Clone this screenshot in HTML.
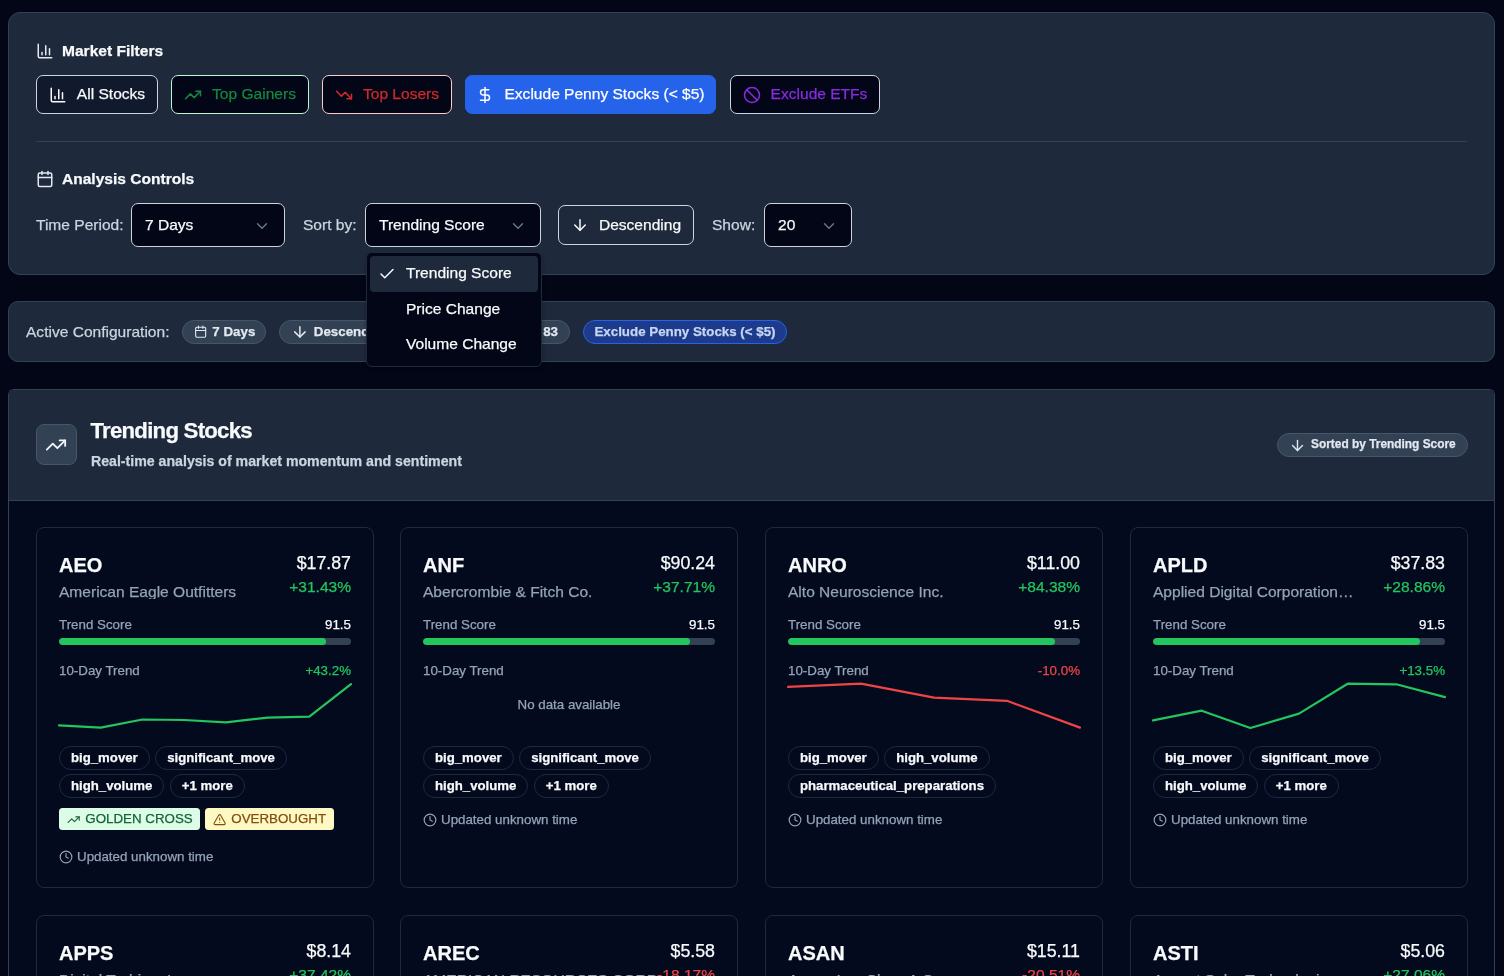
<!DOCTYPE html>
<html>
<head>
<meta charset="utf-8">
<style>
*{box-sizing:border-box;margin:0;padding:0}
html,body{width:1504px;height:976px;overflow:hidden;background:#020617;-webkit-font-smoothing:antialiased;-webkit-text-stroke:0.25px currentColor;font-family:"Liberation Sans",sans-serif;color:#f8fafc}
.a{position:absolute;line-height:1;white-space:nowrap}
svg.i{fill:none;stroke:currentColor;stroke-width:2;stroke-linecap:round;stroke-linejoin:round;display:block}
.panel{position:absolute;background:#1e293b;border:1px solid #334155;border-radius:12px}
.btn{position:absolute;top:75px;height:39px;border:1px solid #cbd5e1;border-radius:7px;background:#020617;display:flex;align-items:center;justify-content:center;gap:10px;font-size:15.56px;line-height:1}
.btn span{position:relative;top:-1px}
.sel{position:absolute;top:203px;height:44px;border:1px solid #cbd5e1;border-radius:7px;background:#020617;font-size:15.56px;line-height:1}
.sel .v{position:absolute;left:13px;top:12.5px;color:#f8fafc}
.sel svg{position:absolute;top:12.5px;color:#64748b}
.lbl{position:absolute;font-size:15.56px;line-height:1;color:#cbd5e1;white-space:nowrap}
.chip{position:absolute;top:320px;height:24px;border-radius:12px;background:#334155;border:1px solid #475569;color:#e2e8f0;font-weight:700;font-size:13.33px;line-height:1;display:flex;align-items:center;white-space:nowrap}
.card{position:absolute;width:338px;height:361px;border:1px solid #1e293b;border-radius:8px;background:#040a1e;overflow:hidden}
.tag{position:relative;height:24px;padding-bottom:1px !important;border:1px solid #1e293b;border-radius:12px;font-weight:700;font-size:13.2px;line-height:1;color:#f8fafc;display:flex;align-items:center;padding:0 11px;white-space:nowrap}
</style>
</head>
<body><div id="root" style="position:absolute;left:0;top:0;width:1504px;height:976px;will-change:transform">

<!-- Panel 1 -->
<div class="panel" style="left:8px;top:12px;width:1487px;height:263px"></div>

<svg class="i" style="position:absolute;left:36px;top:42px;color:#e2e8f0" width="18" height="18" viewBox="0 0 24 24"><path d="M3 3v16a2 2 0 0 0 2 2h16"/><path d="M18 17V9"/><path d="M13 17V5"/><path d="M8 17v-3"/></svg>
<div class="a" style="left:62px;top:43px;font-size:15.56px;font-weight:700">Market Filters</div>

<div class="btn" style="left:36px;width:122px;background:#111a2d;color:#f8fafc">
<svg class="i" width="18" height="18" viewBox="0 0 24 24"><path d="M3 3v16a2 2 0 0 0 2 2h16"/><path d="M18 17V9"/><path d="M13 17V5"/><path d="M8 17v-3"/></svg><span>All Stocks</span></div>
<div class="btn" style="left:171px;width:138px;border-color:#bbf7d0;color:#17873f">
<svg class="i" width="18" height="18" viewBox="0 0 24 24"><polyline points="22 7 13.5 15.5 8.5 10.5 2 17"/><polyline points="16 7 22 7 22 13"/></svg><span>Top Gainers</span></div>
<div class="btn" style="left:322px;width:130px;border-color:#fecaca;color:#d02a2a">
<svg class="i" width="18" height="18" viewBox="0 0 24 24"><polyline points="22 17 13.5 8.5 8.5 13.5 2 7"/><polyline points="16 17 22 17 22 11"/></svg><span>Top Losers</span></div>
<div class="btn" style="left:465px;width:251px;border-color:#2563eb;background:#2563eb;color:#ffffff">
<svg class="i" width="18" height="18" viewBox="0 0 24 24"><line x1="12" x2="12" y1="2" y2="22"/><path d="M17 5H9.5a3.5 3.5 0 0 0 0 7h5a3.5 3.5 0 0 1 0 7H6"/></svg><span>Exclude Penny Stocks (&lt; $5)</span></div>
<div class="btn" style="left:730px;width:150px;color:#8a2be2">
<svg class="i" width="18" height="18" viewBox="0 0 24 24"><circle cx="12" cy="12" r="10"/><path d="m4.9 4.9 14.2 14.2"/></svg><span>Exclude ETFs</span></div>

<div style="position:absolute;left:36px;top:141px;width:1431px;height:1px;background:#334155"></div>

<svg class="i" style="position:absolute;left:36px;top:170px;color:#e2e8f0" width="18" height="18" viewBox="0 0 24 24"><path d="M8 2v4"/><path d="M16 2v4"/><rect width="18" height="18" x="3" y="4" rx="2"/><path d="M3 10h18"/></svg>
<div class="a" style="left:62px;top:171px;font-size:15.56px;font-weight:700">Analysis Controls</div>

<div class="lbl" style="left:36px;top:217px">Time Period:</div>
<div class="sel" style="left:131px;width:154px"><span class="v">7 Days</span>
<svg class="i" style="left:121px" width="18" height="18" viewBox="0 0 24 24"><path d="m6 9 6 6 6-6"/></svg></div>

<div class="lbl" style="left:303px;top:217px">Sort by:</div>
<div class="sel" style="left:365px;width:176px"><span class="v">Trending Score</span>
<svg class="i" style="left:143px" width="18" height="18" viewBox="0 0 24 24"><path d="m6 9 6 6 6-6"/></svg></div>

<div class="btn" style="left:558px;top:205px;height:40px;width:136px;background:transparent;color:#f8fafc">
<svg class="i" width="18" height="18" viewBox="0 0 24 24"><path d="M12 5v14"/><path d="m19 12-7 7-7-7"/></svg><span style="top:-0.2px">Descending</span></div>

<div class="lbl" style="left:712px;top:217px">Show:</div>
<div class="sel" style="left:764px;width:88px"><span class="v">20</span>
<svg class="i" style="left:55px" width="18" height="18" viewBox="0 0 24 24"><path d="m6 9 6 6 6-6"/></svg></div>

<!-- Active configuration -->
<div class="panel" style="left:8px;top:301px;width:1487px;height:61px;border-radius:10px"></div>
<div class="lbl" style="left:26px;top:323.5px">Active Configuration:</div>
<div class="chip" style="left:182px;width:84px;padding-left:11px">
<svg class="i" width="13.33" height="13.33" viewBox="0 0 24 24"><path d="M8 2v4"/><path d="M16 2v4"/><rect width="18" height="18" x="3" y="4" rx="2"/><path d="M3 10h18"/></svg><span style="margin-left:5px">7 Days</span></div>
<div class="chip" style="left:279px;width:118px;padding-left:11px">
<svg class="i" width="17.8" height="17.8" viewBox="0 0 24 24"><path d="M12 5v14"/><path d="m19 12-7 7-7-7"/></svg><span style="margin-left:5px">Descending</span></div>
<div class="chip" style="left:410px;width:160px;justify-content:flex-end;padding-right:11px"><span>Min Score: 83</span></div>
<div class="chip" style="left:583px;width:204px;background:#1e3a8a;border-color:#2563eb;color:#c5d5f5;justify-content:center"><span>Exclude Penny Stocks (&lt; $5)</span></div>

<!-- Trending panel -->
<div style="position:absolute;left:8px;top:389px;width:1487px;height:700px;border:1px solid #334155;border-radius:6px;background:#040a1e"></div>
<div style="position:absolute;left:9px;top:390px;width:1485px;height:111px;background:#1e293b;border-bottom:1px solid #334155"></div>
<div style="position:absolute;left:36px;top:424px;width:41px;height:41px;border-radius:8px;background:#334155;border:1px solid #475569"></div>
<svg class="i" style="position:absolute;left:45px;top:434px;color:#f1f5f9" width="22" height="22" viewBox="0 0 24 24"><polyline points="22 7 13.5 15.5 8.5 10.5 2 17"/><polyline points="16 7 22 7 22 13"/></svg>
<div class="a" style="left:90.5px;top:419.5px;font-size:22.2px;font-weight:700;letter-spacing:-0.75px">Trending Stocks</div>
<div class="a" style="left:91px;top:454.3px;font-size:14.15px;font-weight:700;color:#cbd5e1">Real-time analysis of market momentum and sentiment</div>
<div class="chip" style="left:1277px;top:433px;width:191px;padding-left:11px">
<svg class="i" width="17" height="17" viewBox="0 0 24 24"><path d="M12 5v14"/><path d="m19 12-7 7-7-7"/></svg><span style="margin-left:5px;font-size:11.9px">Sorted by Trending Score</span></div>

<!-- CARDS -->
<div class="card" style="left:36px;top:527px">
<div class="a" style="left:22px;top:27.1px;font-size:20px;font-weight:700;color:#f8fafc">AEO</div>
<div class="a" style="right:22px;top:27.09px;font-size:17.78px;color:#f8fafc">$17.87</div>
<div class="a" style="left:22px;top:55.77px;font-size:15.56px;color:#94a3b8;max-width:200px;overflow:hidden;text-overflow:ellipsis;">American Eagle Outfitters</div>
<div class="a" style="right:22px;top:50.87px;font-size:15.56px;color:#22c55e">+31.43%</div>
<div class="a" style="left:22px;top:89.67px;font-size:13.33px;color:#94a3b8">Trend Score</div>
<div class="a" style="right:22px;top:89.67px;font-size:13.33px;color:#f8fafc">91.5</div>
<div style="position:absolute;left:22px;top:110px;width:292px;height:7px;border-radius:4px;background:#334155;overflow:hidden"><div style="width:91.5%;height:100%;background:#22c55e;border-radius:4px"></div></div>
<div class="a" style="left:22px;top:135.87px;font-size:13.33px;color:#94a3b8">10-Day Trend</div>
<div class="a" style="right:22px;top:135.87px;font-size:13.33px;color:#22c55e">+43.2%</div>
<svg style="position:absolute;left:21px;top:150px" width="294" height="60" viewBox="0 0 294 60"><polyline points="1.00,47.40 42.71,49.70 84.43,41.50 126.14,42.00 167.86,44.30 209.57,39.60 251.29,38.70 293.00,6.10" fill="none" stroke="#22c55e" stroke-width="2.2" stroke-linejoin="round" stroke-linecap="round"/></svg>
<div style="position:absolute;left:22px;top:218px;width:292px;display:flex;flex-wrap:wrap;gap:4px 5.5px"><div class="tag">big_mover</div><div class="tag">significant_move</div><div class="tag">high_volume</div><div class="tag">+1 more</div></div>
<div style="position:absolute;left:22px;top:280px;height:22px;width:141px;border-radius:3.5px;background:#dcfce7;color:#166534;font-size:13.33px;line-height:1;display:flex;align-items:center;padding-left:8px;gap:5px"><svg class="i" style="position:relative;top:1px" width="13.33" height="13.33" viewBox="0 0 24 24"><polyline points="22 7 13.5 15.5 8.5 10.5 2 17"/><polyline points="16 7 22 7 22 13"/></svg><span>GOLDEN CROSS</span></div>
<div style="position:absolute;left:168px;top:280px;height:22px;width:129px;border-radius:3.5px;background:#fef9c3;color:#854d0e;font-size:13.33px;line-height:1;display:flex;align-items:center;padding-left:8px;gap:5px"><svg class="i" style="position:relative;top:1px" width="13.33" height="13.33" viewBox="0 0 24 24"><path d="m21.73 18-8-14a2 2 0 0 0-3.48 0l-8 14A2 2 0 0 0 4 21h16a2 2 0 0 0 1.73-3Z"/><path d="M12 9v4"/><path d="M12 17h.01"/></svg><span>OVERBOUGHT</span></div>
<div style="position:absolute;left:22px;top:322.14px;color:#94a3b8;display:flex;align-items:center;gap:4px;font-size:13.33px;line-height:1;white-space:nowrap"><svg class="i" width="14" height="14" viewBox="0 0 24 24"><circle cx="12" cy="12" r="10"/><polyline points="12 6 12 12 16 14"/></svg><span>Updated unknown time</span></div>
</div>
<div class="card" style="left:400px;top:527px">
<div class="a" style="left:22px;top:27.1px;font-size:20px;font-weight:700;color:#f8fafc">ANF</div>
<div class="a" style="right:22px;top:27.09px;font-size:17.78px;color:#f8fafc">$90.24</div>
<div class="a" style="left:22px;top:55.77px;font-size:15.56px;color:#94a3b8;max-width:200px;overflow:hidden;text-overflow:ellipsis;">Abercrombie &amp; Fitch Co.</div>
<div class="a" style="right:22px;top:50.87px;font-size:15.56px;color:#22c55e">+37.71%</div>
<div class="a" style="left:22px;top:89.67px;font-size:13.33px;color:#94a3b8">Trend Score</div>
<div class="a" style="right:22px;top:89.67px;font-size:13.33px;color:#f8fafc">91.5</div>
<div style="position:absolute;left:22px;top:110px;width:292px;height:7px;border-radius:4px;background:#334155;overflow:hidden"><div style="width:91.5%;height:100%;background:#22c55e;border-radius:4px"></div></div>
<div class="a" style="left:22px;top:135.87px;font-size:13.33px;color:#94a3b8">10-Day Trend</div>
<div class="a" style="left:22px;width:292px;text-align:center;top:170.37px;font-size:13.33px;color:#94a3b8">No data available</div>
<div style="position:absolute;left:22px;top:218px;width:292px;display:flex;flex-wrap:wrap;gap:4px 5.5px"><div class="tag">big_mover</div><div class="tag">significant_move</div><div class="tag">high_volume</div><div class="tag">+1 more</div></div>
<div style="position:absolute;left:22px;top:284.94px;color:#94a3b8;display:flex;align-items:center;gap:4px;font-size:13.33px;line-height:1;white-space:nowrap"><svg class="i" width="14" height="14" viewBox="0 0 24 24"><circle cx="12" cy="12" r="10"/><polyline points="12 6 12 12 16 14"/></svg><span>Updated unknown time</span></div>
</div>
<div class="card" style="left:765px;top:527px">
<div class="a" style="left:22px;top:27.1px;font-size:20px;font-weight:700;color:#f8fafc">ANRO</div>
<div class="a" style="right:22px;top:27.09px;font-size:17.78px;color:#f8fafc">$11.00</div>
<div class="a" style="left:22px;top:55.77px;font-size:15.56px;color:#94a3b8;max-width:200px;overflow:hidden;text-overflow:ellipsis;">Alto Neuroscience Inc.</div>
<div class="a" style="right:22px;top:50.87px;font-size:15.56px;color:#22c55e">+84.38%</div>
<div class="a" style="left:22px;top:89.67px;font-size:13.33px;color:#94a3b8">Trend Score</div>
<div class="a" style="right:22px;top:89.67px;font-size:13.33px;color:#f8fafc">91.5</div>
<div style="position:absolute;left:22px;top:110px;width:292px;height:7px;border-radius:4px;background:#334155;overflow:hidden"><div style="width:91.5%;height:100%;background:#22c55e;border-radius:4px"></div></div>
<div class="a" style="left:22px;top:135.87px;font-size:13.33px;color:#94a3b8">10-Day Trend</div>
<div class="a" style="right:22px;top:135.87px;font-size:13.33px;color:#ef4444">-10.0%</div>
<svg style="position:absolute;left:21px;top:150px" width="294" height="60" viewBox="0 0 294 60"><polyline points="1.00,8.80 74.00,5.70 147.00,19.70 220.00,22.80 293.00,49.60" fill="none" stroke="#ef4444" stroke-width="2.2" stroke-linejoin="round" stroke-linecap="round"/></svg>
<div style="position:absolute;left:22px;top:218px;width:292px;display:flex;flex-wrap:wrap;gap:4px 5.5px"><div class="tag">big_mover</div><div class="tag">high_volume</div><div class="tag">pharmaceutical_preparations</div></div>
<div style="position:absolute;left:22px;top:284.94px;color:#94a3b8;display:flex;align-items:center;gap:4px;font-size:13.33px;line-height:1;white-space:nowrap"><svg class="i" width="14" height="14" viewBox="0 0 24 24"><circle cx="12" cy="12" r="10"/><polyline points="12 6 12 12 16 14"/></svg><span>Updated unknown time</span></div>
</div>
<div class="card" style="left:1130px;top:527px">
<div class="a" style="left:22px;top:27.1px;font-size:20px;font-weight:700;color:#f8fafc">APLD</div>
<div class="a" style="right:22px;top:27.09px;font-size:17.78px;color:#f8fafc">$37.83</div>
<div class="a" style="left:22px;top:55.77px;font-size:15.56px;color:#94a3b8;">Applied Digital Corporation…</div>
<div class="a" style="right:22px;top:50.87px;font-size:15.56px;color:#22c55e">+28.86%</div>
<div class="a" style="left:22px;top:89.67px;font-size:13.33px;color:#94a3b8">Trend Score</div>
<div class="a" style="right:22px;top:89.67px;font-size:13.33px;color:#f8fafc">91.5</div>
<div style="position:absolute;left:22px;top:110px;width:292px;height:7px;border-radius:4px;background:#334155;overflow:hidden"><div style="width:91.5%;height:100%;background:#22c55e;border-radius:4px"></div></div>
<div class="a" style="left:22px;top:135.87px;font-size:13.33px;color:#94a3b8">10-Day Trend</div>
<div class="a" style="right:22px;top:135.87px;font-size:13.33px;color:#22c55e">+13.5%</div>
<svg style="position:absolute;left:21px;top:150px" width="294" height="60" viewBox="0 0 294 60"><polyline points="1.00,42.40 49.67,32.70 98.33,50.00 147.00,35.60 195.67,5.70 244.33,6.30 293.00,19.10" fill="none" stroke="#22c55e" stroke-width="2.2" stroke-linejoin="round" stroke-linecap="round"/></svg>
<div style="position:absolute;left:22px;top:218px;width:292px;display:flex;flex-wrap:wrap;gap:4px 5.5px"><div class="tag">big_mover</div><div class="tag">significant_move</div><div class="tag">high_volume</div><div class="tag">+1 more</div></div>
<div style="position:absolute;left:22px;top:284.94px;color:#94a3b8;display:flex;align-items:center;gap:4px;font-size:13.33px;line-height:1;white-space:nowrap"><svg class="i" width="14" height="14" viewBox="0 0 24 24"><circle cx="12" cy="12" r="10"/><polyline points="12 6 12 12 16 14"/></svg><span>Updated unknown time</span></div>
</div>
<div class="card" style="left:36px;top:915px">
<div class="a" style="left:22px;top:27.1px;font-size:20px;font-weight:700;color:#f8fafc">APPS</div>
<div class="a" style="right:22px;top:27.09px;font-size:17.78px;color:#f8fafc">$8.14</div>
<div class="a" style="left:22px;top:55.77px;font-size:15.56px;color:#94a3b8;max-width:200px;overflow:hidden;text-overflow:ellipsis;">Digital Turbine, Inc.</div>
<div class="a" style="right:22px;top:50.87px;font-size:15.56px;color:#22c55e">+37.42%</div>
</div>
<div class="card" style="left:400px;top:915px">
<div class="a" style="left:22px;top:27.1px;font-size:20px;font-weight:700;color:#f8fafc">AREC</div>
<div class="a" style="right:22px;top:27.09px;font-size:17.78px;color:#f8fafc">$5.58</div>
<div class="a" style="left:22px;top:55.77px;font-size:15.56px;color:#94a3b8;">AMERICAN RESOURCES CORP</div>
<div class="a" style="right:22px;top:50.87px;font-size:15.56px;color:#ef4444">-18.17%</div>
</div>
<div class="card" style="left:765px;top:915px">
<div class="a" style="left:22px;top:27.1px;font-size:20px;font-weight:700;color:#f8fafc">ASAN</div>
<div class="a" style="right:22px;top:27.09px;font-size:17.78px;color:#f8fafc">$15.11</div>
<div class="a" style="left:22px;top:55.77px;font-size:15.56px;color:#94a3b8;">Asana Inc. Class A Common…</div>
<div class="a" style="right:22px;top:50.87px;font-size:15.56px;color:#ef4444">-20.51%</div>
</div>
<div class="card" style="left:1130px;top:915px">
<div class="a" style="left:22px;top:27.1px;font-size:20px;font-weight:700;color:#f8fafc">ASTI</div>
<div class="a" style="right:22px;top:27.09px;font-size:17.78px;color:#f8fafc">$5.06</div>
<div class="a" style="left:22px;top:55.77px;font-size:15.56px;color:#94a3b8;max-width:200px;overflow:hidden;text-overflow:ellipsis;">Ascent Solar Technologies Inc</div>
<div class="a" style="right:22px;top:50.87px;font-size:15.56px;color:#22c55e">+27.06%</div>
</div>
<!-- /CARDS -->

<!-- Dropdown -->
<div style="position:absolute;left:365.5px;top:252px;width:176.5px;height:115px;background:#020617;border:1px solid #1e293b;border-radius:6px;box-shadow:0 2px 4px rgba(0,0,0,.25)"></div>
<div style="position:absolute;left:370px;top:256px;width:168px;height:36px;background:#1e293b;border-radius:4px"></div>
<svg class="i" style="position:absolute;left:378px;top:265px;color:#f8fafc" width="18" height="18" viewBox="0 0 24 24"><path d="M20 6 9 17l-5-5"/></svg>
<div class="a" style="left:406px;top:265px;font-size:15.56px">Trending Score</div>
<div class="a" style="left:406px;top:301px;font-size:15.56px">Price Change</div>
<div class="a" style="left:406px;top:336px;font-size:15.56px">Volume Change</div>

</div></body>
</html>
